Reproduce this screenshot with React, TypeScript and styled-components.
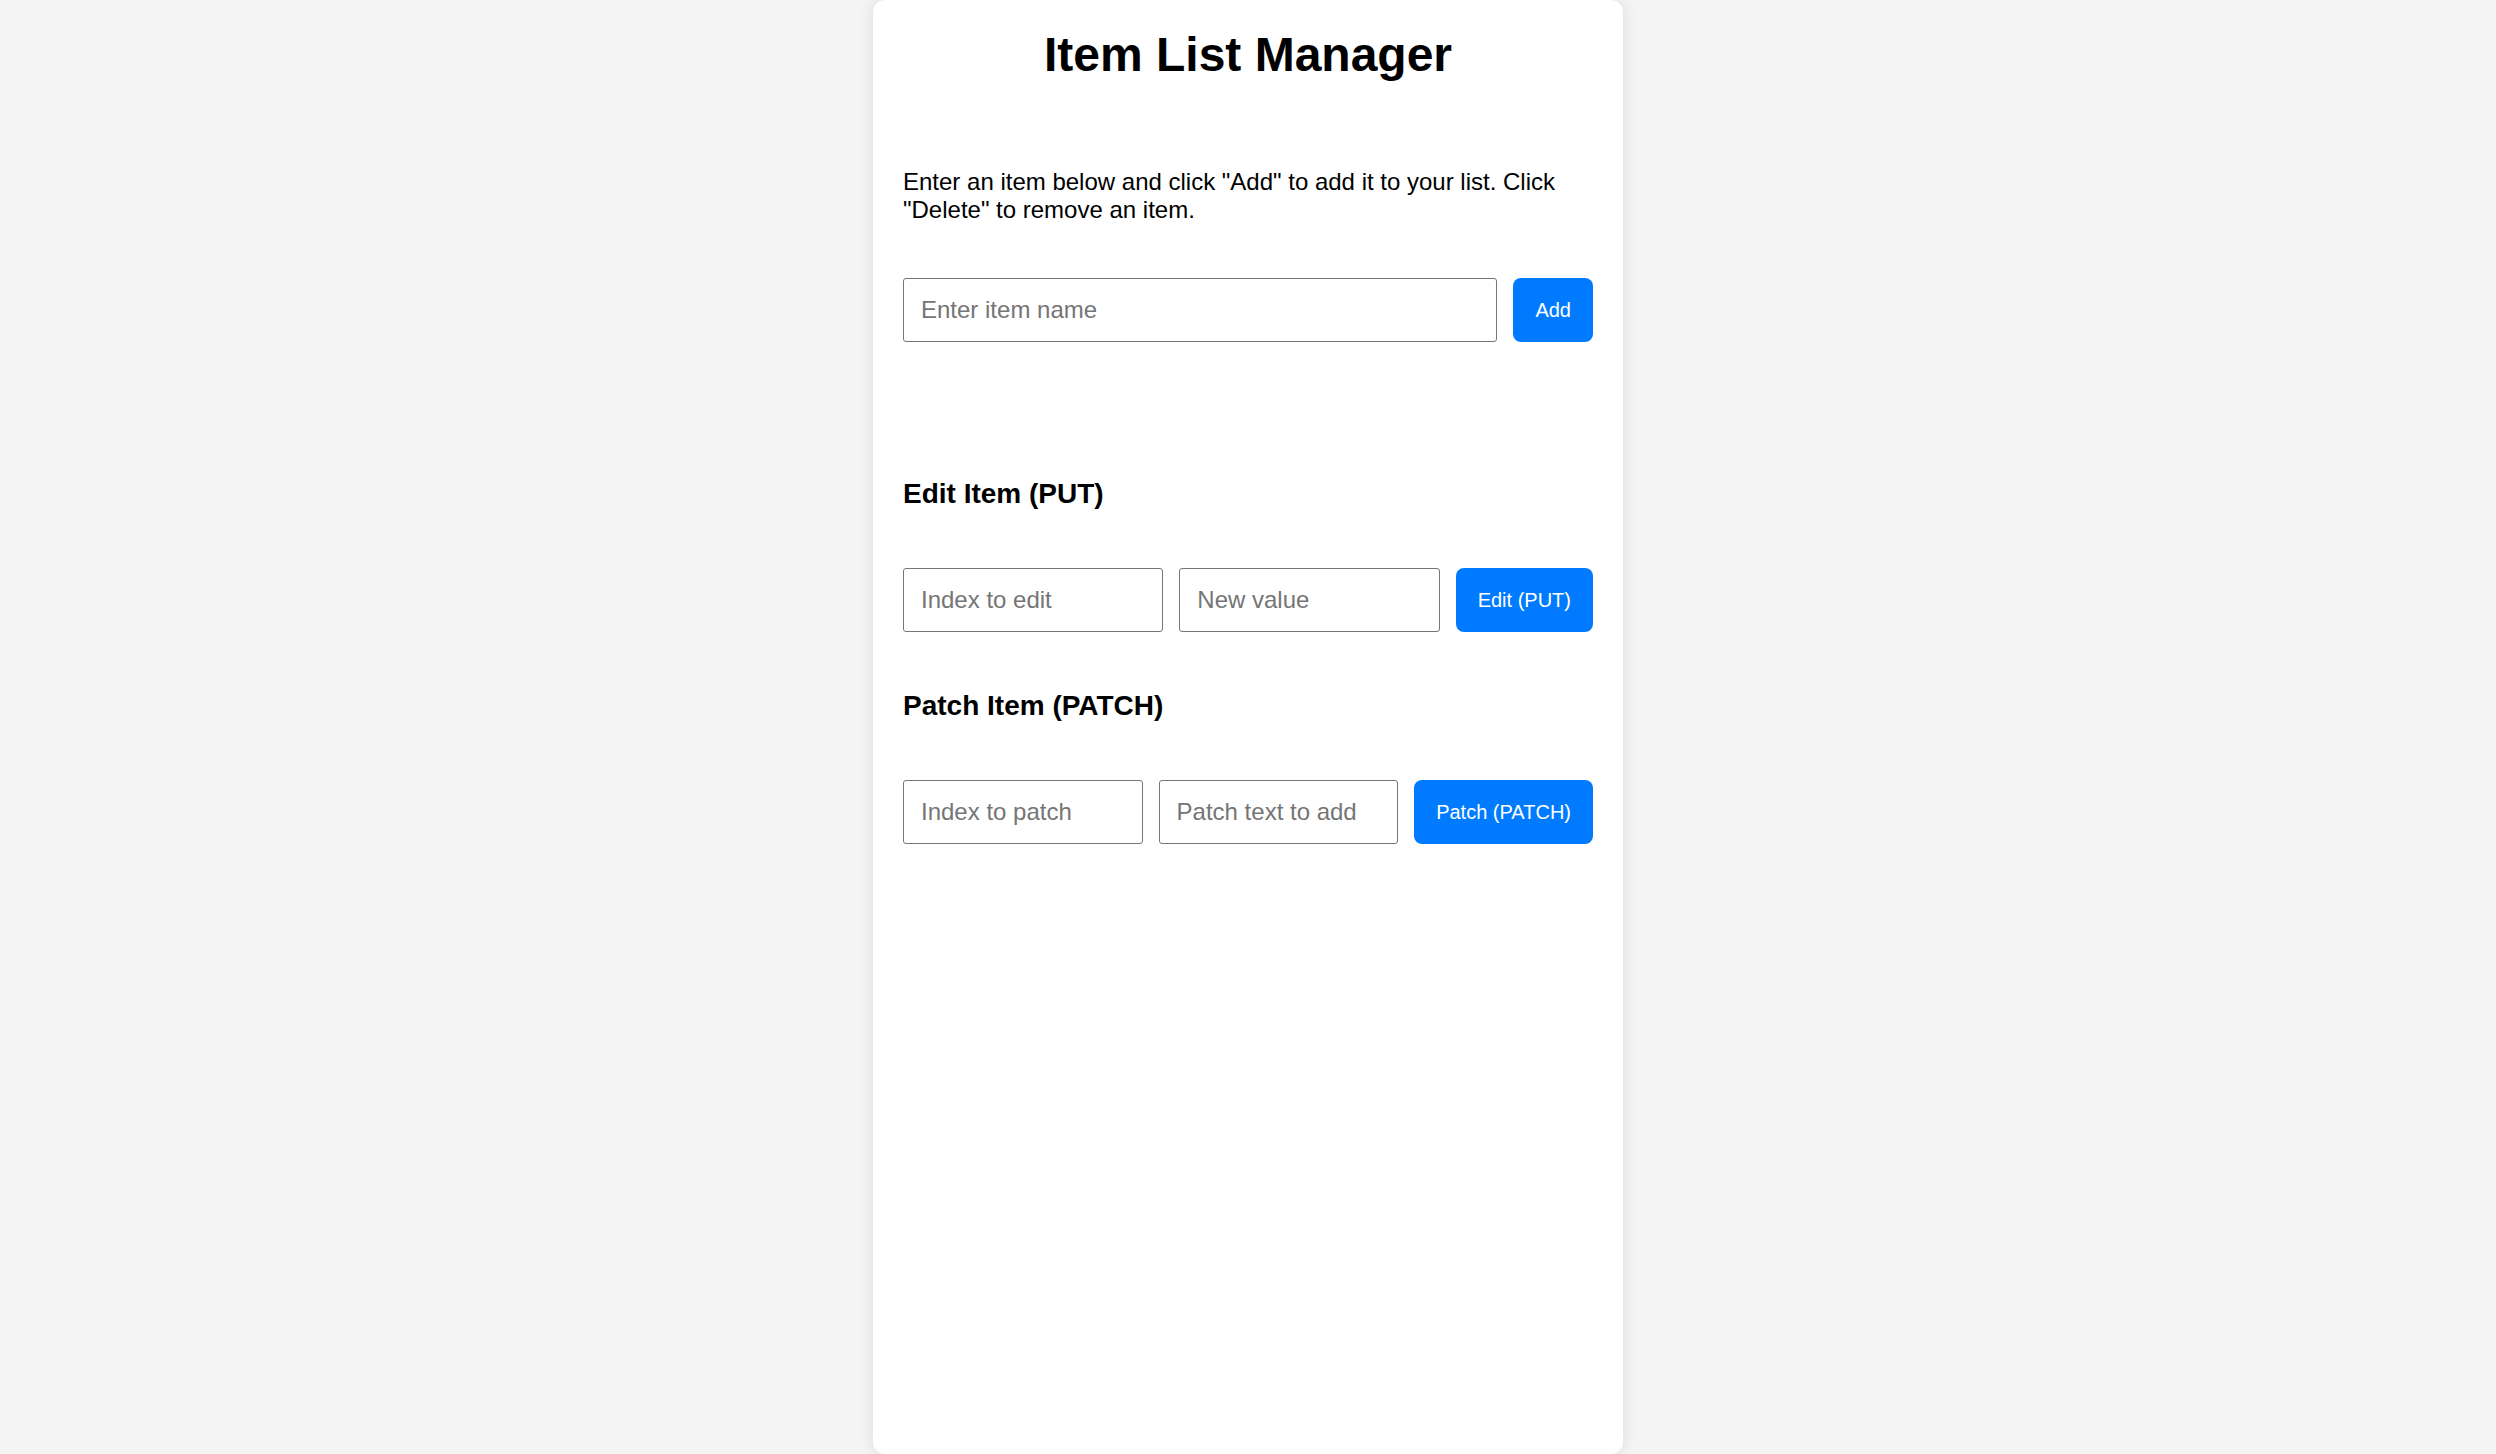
import React, { useState } from "react";
import styled, { createGlobalStyle } from "styled-components";

const GlobalStyle = createGlobalStyle`
  html, body {
    margin: 0;
    padding: 0;
    background: #f4f4f4;
    font-family: "Liberation Sans", Arial, sans-serif;
    color: #000;
  }
  * { box-sizing: border-box; }
`;

const Card = styled.div`
  width: 750px;
  min-height: 100vh;
  margin: 0 auto;
  padding: 0 30px 30px;
  background: #fff;
  border-radius: 12px;
  box-shadow: 0 0 15px rgba(0, 0, 0, 0.1);
`;

const Title = styled.h1`
  margin: 0;
  padding-top: 27px;
  font-size: 48px;
  line-height: 56px;
  font-weight: bold;
  text-align: center;
`;

const Intro = styled.p`
  margin: 85px 0 54px;
  font-size: 24px;
  line-height: 28px;
`;

const Row = styled.div`
  display: flex;
  gap: 16px;
`;

const TextInput = styled.input`
  flex: 1;
  min-width: 0;
  height: 64px;
  padding: 0 17px;
  border: 1px solid #767676;
  border-radius: 3px;
  font-family: "Liberation Sans", Arial, sans-serif;
  font-size: 24px;
  color: #000;
  background: #fff;
  &::placeholder {
    color: #757575;
  }
`;

const ActionButton = styled.button`
  flex: none;
  height: 64px;
  padding: 0 22px;
  border: none;
  border-radius: 8px;
  background: #007bff;
  color: #fff;
  font-family: "Liberation Sans", Arial, sans-serif;
  font-size: 20px;
  cursor: pointer;
`;

const ItemList = styled.ul`
  margin: 0;
  padding: 0;
  list-style: none;
  height: 136px;
`;

const SectionTitle = styled.h3`
  margin: 0 0 58px;
  font-size: 28px;
  line-height: 32px;
  font-weight: bold;
`;

const Section = styled.div`
  & + & {
    margin-top: 58px;
  }
`;

export default function App() {
  const [items, setItems] = useState<string[]>([]);
  const [name, setName] = useState("");
  const [editIndex, setEditIndex] = useState("");
  const [editValue, setEditValue] = useState("");
  const [patchIndex, setPatchIndex] = useState("");
  const [patchText, setPatchText] = useState("");

  const add = () => {
    if (!name.trim()) return;
    setItems([...items, name.trim()]);
    setName("");
  };

  const edit = () => {
    const i = parseInt(editIndex, 10);
    if (isNaN(i) || !items[i]) return;
    setItems(items.map((it, k) => (k === i ? editValue : it)));
  };

  const patch = () => {
    const i = parseInt(patchIndex, 10);
    if (isNaN(i) || !items[i]) return;
    setItems(items.map((it, k) => (k === i ? it + patchText : it)));
  };

  return (
    <>
      <GlobalStyle />
      <Card>
        <Title>Item List Manager</Title>
        <Intro>
          Enter an item below and click "Add" to add it to your list. Click "Delete" to remove an item.
        </Intro>
        <Row>
          <TextInput placeholder="Enter item name" value={name} onChange={(e) => setName(e.target.value)} />
          <ActionButton onClick={add}>Add</ActionButton>
        </Row>
        <ItemList>
          {items.map((it, i) => (
            <li key={i}>{it}</li>
          ))}
        </ItemList>
        <Section>
          <SectionTitle>Edit Item (PUT)</SectionTitle>
          <Row>
            <TextInput placeholder="Index to edit" value={editIndex} onChange={(e) => setEditIndex(e.target.value)} />
            <TextInput placeholder="New value" value={editValue} onChange={(e) => setEditValue(e.target.value)} />
            <ActionButton onClick={edit}>Edit (PUT)</ActionButton>
          </Row>
        </Section>
        <Section>
          <SectionTitle>Patch Item (PATCH)</SectionTitle>
          <Row>
            <TextInput placeholder="Index to patch" value={patchIndex} onChange={(e) => setPatchIndex(e.target.value)} />
            <TextInput placeholder="Patch text to add" value={patchText} onChange={(e) => setPatchText(e.target.value)} />
            <ActionButton onClick={patch}>Patch (PATCH)</ActionButton>
          </Row>
        </Section>
      </Card>
    </>
  );
}
